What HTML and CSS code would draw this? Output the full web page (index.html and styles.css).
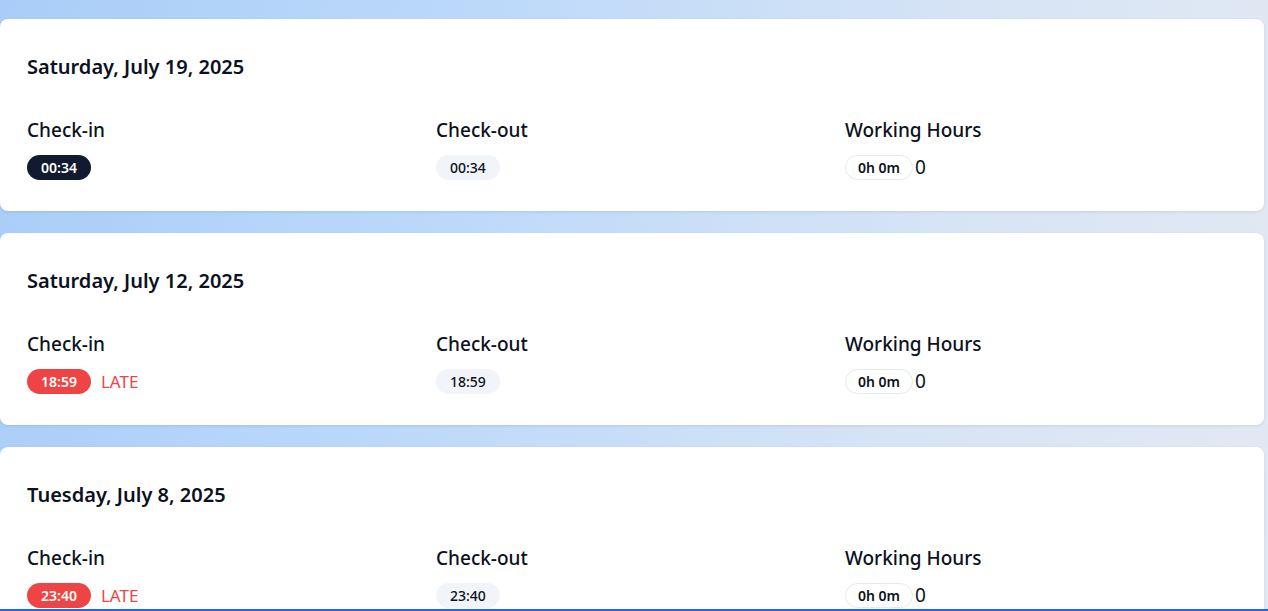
FILE: index.html
```html
<!DOCTYPE html>
<html lang="en">
<head>
<meta charset="utf-8">
<title>Attendance</title>
<link rel="stylesheet" href="styles.css">
</head>
<body>
<main class="list">
  <section class="card">
    <h2 class="date">Saturday, July 19, 2025</h2>
    <div class="cols">
      <div class="col">
        <div class="label">Check-in</div>
        <div class="row"><span class="pill pill-dark">00:34</span></div>
      </div>
      <div class="col">
        <div class="label">Check-out</div>
        <div class="row"><span class="pill pill-light">00:34</span></div>
      </div>
      <div class="col">
        <div class="label">Working Hours</div>
        <div class="row"><span class="pill pill-outline">0h 0m</span><span class="extra">0</span></div>
      </div>
    </div>
  </section>
  <section class="card">
    <h2 class="date">Saturday, July 12, 2025</h2>
    <div class="cols">
      <div class="col">
        <div class="label">Check-in</div>
        <div class="row"><span class="pill pill-red">18:59</span><span class="late">LATE</span></div>
      </div>
      <div class="col">
        <div class="label">Check-out</div>
        <div class="row"><span class="pill pill-light">18:59</span></div>
      </div>
      <div class="col">
        <div class="label">Working Hours</div>
        <div class="row"><span class="pill pill-outline">0h 0m</span><span class="extra">0</span></div>
      </div>
    </div>
  </section>
  <section class="card">
    <h2 class="date">Tuesday, July 8, 2025</h2>
    <div class="cols">
      <div class="col">
        <div class="label">Check-in</div>
        <div class="row"><span class="pill pill-red">23:40</span><span class="late">LATE</span></div>
      </div>
      <div class="col">
        <div class="label">Check-out</div>
        <div class="row"><span class="pill pill-light">23:40</span></div>
      </div>
      <div class="col">
        <div class="label">Working Hours</div>
        <div class="row"><span class="pill pill-outline">0h 0m</span><span class="extra">0</span></div>
      </div>
    </div>
  </section>
</main>
<div class="bottom-line"></div>
</body>
</html>
```

FILE: styles.css
```css
html, body {
  margin: 0;
  padding: 0;
}
body {
  font-family: "Noto Sans", "Open Sans", sans-serif;
  color: #0b1120;
  background: linear-gradient(100deg, #a9cdf8 0%, #bcd9fa 35%, #d6e4f5 70%, #e3e9f3 100%);
  min-height: 611px;
  overflow: hidden;
}
.list {
  display: flex;
  flex-direction: column;
  gap: 22px;
  padding: 19px 4px 0 0;
}
.card {
  background: #ffffff;
  border-radius: 8px;
  box-shadow: 0 1px 3px rgba(30, 64, 120, 0.12);
  padding: 32px 27px 30px;
  height: 192px;
  box-sizing: border-box;
}
.date {
  margin: 0 0 33px;
  font-size: 20px;
  line-height: 32px;
  font-weight: 600;
}
.cols {
  display: grid;
  grid-template-columns: 409px 409px 1fr;
}
.label {
  font-size: 19px;
  line-height: 28px;
  font-weight: 500;
  margin-bottom: 9px;
}
.row {
  display: flex;
  align-items: center;
  height: 28px;
}
.pill {
  display: inline-flex;
  align-items: center;
  justify-content: center;
  height: 25px;
  padding: 0 14px;
  border-radius: 13px;
  font-size: 14px;
  font-weight: 600;
  box-sizing: border-box;
}
.pill-dark {
  background: #111a2e;
  color: #ffffff;
}
.pill-red {
  background: #ef4444;
  color: #ffffff;
}
.pill-light {
  background: #f1f5f9;
  color: #0b1120;
  font-weight: 500;
}
.pill-outline {
  background: #ffffff;
  border: 1px solid #e5e9f0;
  color: #0b1120;
  padding: 0 12px;
}
.extra {
  font-size: 19px;
  margin-left: 2px;
}
.late {
  color: #ef4444;
  font-size: 17px;
  margin-left: 10px;
}
.bottom-line {
  position: fixed;
  left: 0;
  right: 0;
  bottom: 0;
  height: 2px;
  background: #2563eb;
}
```
